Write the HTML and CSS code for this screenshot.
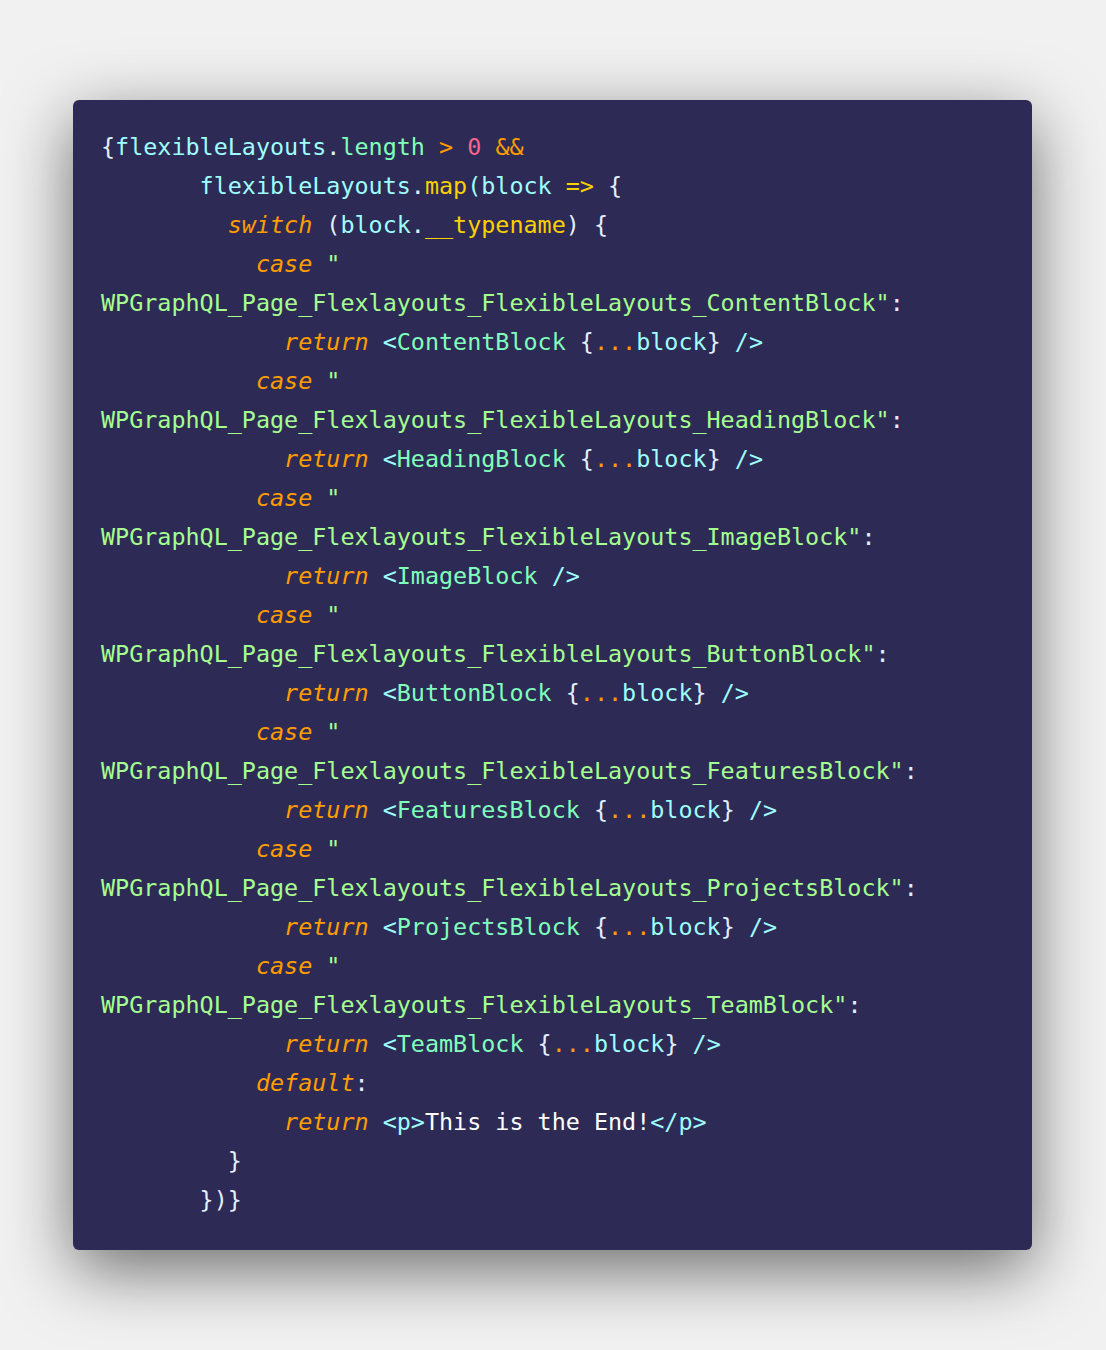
FILE: index.html
```html
<!DOCTYPE html>
<html>
<head>
<meta charset="utf-8">
<link rel="stylesheet" href="styles.css">
</head>
<body>
<div class="frame">
<pre class="code"><span class="p">{</span><span class="v">flexibleLayouts</span><span class="p">.</span><span class="prop">length</span> <span class="k">&gt;</span> <span class="n">0</span> <span class="k">&amp;&amp;</span>
       <span class="v">flexibleLayouts</span><span class="p">.</span><span class="y">map</span><span class="v">(block</span> <span class="y">=&gt;</span> <span class="p">{</span>
         <span class="k i">switch</span> <span class="p">(</span><span class="v">block</span><span class="p">.</span><span class="y">__typename</span><span class="p">)</span> <span class="p">{</span>
           <span class="k i">case</span> <span class="s">"</span>
<span class="s">WPGraphQL_Page_Flexlayouts_FlexibleLayouts_ContentBlock"</span><span class="p">:</span>
             <span class="k i">return</span> <span class="v">&lt;</span><span class="c">ContentBlock</span> <span class="p">{</span><span class="k">...</span><span class="v">block</span><span class="p">}</span> <span class="v">/&gt;</span>
           <span class="k i">case</span> <span class="s">"</span>
<span class="s">WPGraphQL_Page_Flexlayouts_FlexibleLayouts_HeadingBlock"</span><span class="p">:</span>
             <span class="k i">return</span> <span class="v">&lt;</span><span class="c">HeadingBlock</span> <span class="p">{</span><span class="k">...</span><span class="v">block</span><span class="p">}</span> <span class="v">/&gt;</span>
           <span class="k i">case</span> <span class="s">"</span>
<span class="s">WPGraphQL_Page_Flexlayouts_FlexibleLayouts_ImageBlock"</span><span class="p">:</span>
             <span class="k i">return</span> <span class="v">&lt;</span><span class="c">ImageBlock</span> <span class="v">/&gt;</span>
           <span class="k i">case</span> <span class="s">"</span>
<span class="s">WPGraphQL_Page_Flexlayouts_FlexibleLayouts_ButtonBlock"</span><span class="p">:</span>
             <span class="k i">return</span> <span class="v">&lt;</span><span class="c">ButtonBlock</span> <span class="p">{</span><span class="k">...</span><span class="v">block</span><span class="p">}</span> <span class="v">/&gt;</span>
           <span class="k i">case</span> <span class="s">"</span>
<span class="s">WPGraphQL_Page_Flexlayouts_FlexibleLayouts_FeaturesBlock"</span><span class="p">:</span>
             <span class="k i">return</span> <span class="v">&lt;</span><span class="c">FeaturesBlock</span> <span class="p">{</span><span class="k">...</span><span class="v">block</span><span class="p">}</span> <span class="v">/&gt;</span>
           <span class="k i">case</span> <span class="s">"</span>
<span class="s">WPGraphQL_Page_Flexlayouts_FlexibleLayouts_ProjectsBlock"</span><span class="p">:</span>
             <span class="k i">return</span> <span class="v">&lt;</span><span class="c">ProjectsBlock</span> <span class="p">{</span><span class="k">...</span><span class="v">block</span><span class="p">}</span> <span class="v">/&gt;</span>
           <span class="k i">case</span> <span class="s">"</span>
<span class="s">WPGraphQL_Page_Flexlayouts_FlexibleLayouts_TeamBlock"</span><span class="p">:</span>
             <span class="k i">return</span> <span class="v">&lt;</span><span class="c">TeamBlock</span> <span class="p">{</span><span class="k">...</span><span class="v">block</span><span class="p">}</span> <span class="v">/&gt;</span>
           <span class="k i">default</span><span class="p">:</span>
             <span class="k i">return</span> <span class="v">&lt;p&gt;</span><span class="w">This is the End!</span><span class="v">&lt;/p&gt;</span>
         <span class="p">}</span>
       <span class="p">})}</span></pre>
</div>
</body>
</html>
```

FILE: styles.css
```css
html, body {
  margin: 0;
  padding: 0;
  background: #f1f1f1;
}

body {
  padding: 100px 0 0 73px;
  min-height: 1350px;
  box-sizing: border-box;
}

.frame {
  width: 959px;
  box-sizing: border-box;
  background: #2d2b55;
  border-radius: 6px;
  box-shadow: 0 20px 68px rgba(0, 0, 0, 0.55);
  padding: 28px 28px 30px 28px;
}

.code {
  margin: 0;
  font-family: "DejaVu Sans Mono", "Liberation Mono", monospace;
  font-size: 23.4px;
  line-height: 39px;
  color: #e1efff;
  white-space: pre;
}

.p { color: #e1efff; }
.v { color: #9effff; }
.prop { color: #80ffbb; }
.c { color: #80ffbb; }
.k { color: #ff9d00; }
.i { font-style: italic; }
.n { color: #ff628c; }
.y { color: #fad000; }
.s { color: #a5ff90; }
.w { color: #ffffff; }
```
